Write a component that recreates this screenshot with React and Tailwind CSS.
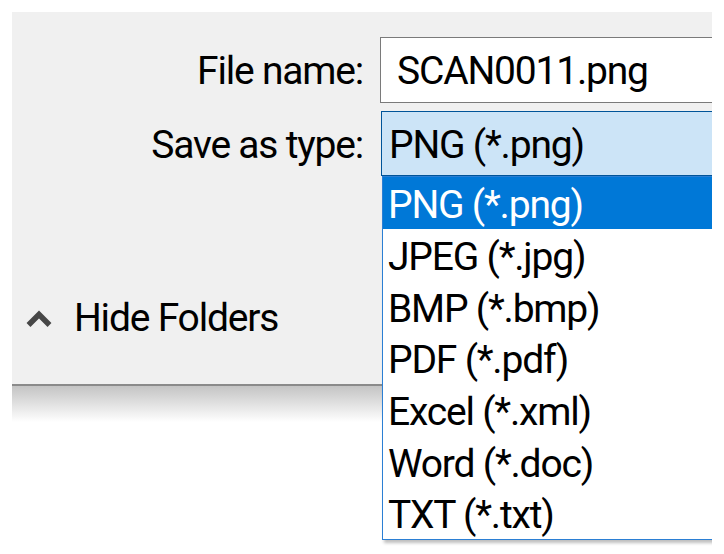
import React from "react";

const types = [
  "PNG (*.png)",
  "JPEG (*.jpg)",
  "BMP (*.bmp)",
  "PDF (*.pdf)",
  "Excel (*.xml)",
  "Word (*.doc)",
  "TXT (*.txt)",
];

function ChevronUp() {
  return (
    <svg width="28" height="20" viewBox="0 0 28 20" className="shrink-0">
      <path d="M3.5 16 L14 5.5 L24.5 16" fill="none" stroke="#474747" strokeWidth="5.5" strokeLinejoin="miter" />
    </svg>
  );
}

export default function App() {
  return (
    <div className="relative w-[724px] h-[554px] bg-white overflow-hidden font-['Roboto',sans-serif] text-[39px] tracking-[-1.2px] leading-none text-black">
      <div className="pl-[12px] pt-[12px]">
        <div className="w-[700px] overflow-hidden">
          {/* dialog body */}
          <div className="h-[374px] bg-[#f0f0f0] border-b-2 border-[#8a8a8a] pt-[25px]">
            <div className="grid grid-cols-[351px_1fr] gap-x-[17px] gap-y-[8px]">
              <div className="h-[66px] flex items-center justify-end pt-[3px]">File name:</div>
              <div className="h-[66px] w-[360px] bg-white border border-[#7a7a7a] flex items-center pl-[16px] pt-[3px]">
                SCAN0011.png
              </div>
              <div className="h-[65px] flex items-center justify-end pt-[3px]">Save as type:</div>
              <div className="h-[65px] w-[360px] ml-[1px] bg-[#cce4f7] border border-[#005499] flex items-center pl-[7px] pt-[3px]">
                PNG (*.png)
              </div>
            </div>
            <div className="mt-[123px] flex items-center gap-[21px] pl-[13px]">
              <ChevronUp />
              <span>Hide Folders</span>
            </div>
          </div>
          {/* soft shadow under the dialog */}
          <div className="h-[36px] bg-gradient-to-b from-[#c4c4c4] to-white" />
        </div>
      </div>

      {/* open drop-down list */}
      <div className="absolute left-[382px] top-[176px] w-[330px] overflow-visible">
        <div className="w-[360px] bg-white border border-[#2b7fd4] shadow-[2px_3px_3px_rgba(0,0,0,0.25)] flex flex-col">
          {types.map((t, i) => (
            <div
              key={t}
              className={
                i === 0
                  ? "h-[51.7px] flex items-center pl-[5px] pt-[6px] bg-[#0078d7] text-white"
                  : "h-[51.7px] flex items-center pl-[5px] pt-[6px]"
              }
            >
              {t}
            </div>
          ))}
        </div>
      </div>
      {/* right edge of the capture */}
      <div className="absolute right-0 top-0 w-[12px] h-full bg-white" />
    </div>
  );
}
